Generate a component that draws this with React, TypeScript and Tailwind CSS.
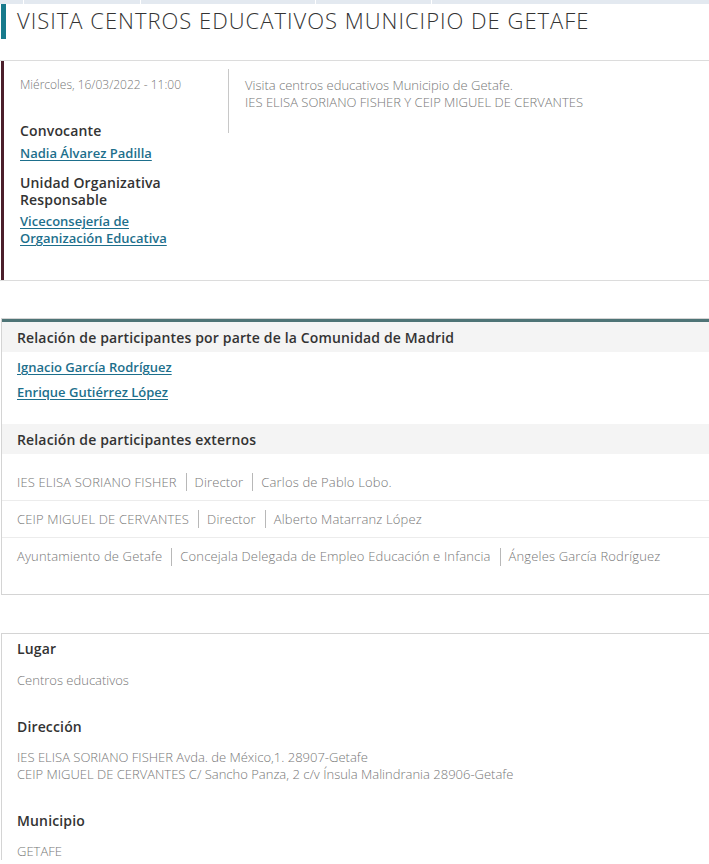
const externos = [
  ["IES ELISA SORIANO FISHER", "Director", "Carlos de Pablo Lobo."],
  ["CEIP MIGUEL DE CERVANTES", "Director", "Alberto Matarranz López"],
  ["Ayuntamiento de Getafe", "Concejala Delegada de Empleo Educación e Infancia", "Ángeles García Rodríguez"],
];

const linkCls = "text-[#1d6f8c] underline underline-offset-2 decoration-1 text-[13px] font-semibold";
const headCls = "text-[14px] font-semibold tracking-[0.15px] text-[#333]";
const bodyCls = "text-[13px] leading-[17px] font-light text-[#777]";

const App = () => {
  return (
    <div className="w-[709px] min-h-[864px] bg-white text-[#333] font-['Open_Sans',sans-serif] overflow-hidden">
      {/* top strip */}
      <div className="h-[4px] bg-[#e3e9f0] flex">
        <div className="w-[24px] border-r border-white" />
        <div className="w-[117px] border-r border-white" />
        <div className="w-[175px] border-r border-white" />
        <div className="w-[116px] border-r border-white" />
      </div>

      {/* title */}
      <div className="flex items-stretch h-[35px] pl-[1px]">
        <div className="w-[5px] bg-[#177a8c]" />
        <h1 className="pl-[11px] text-[22px] leading-[33px] font-light tracking-[1px] text-[#333]">
          VISITA CENTROS EDUCATIVOS MUNICIPIO DE GETAFE
        </h1>
      </div>

      {/* event card */}
      <div className="mt-[21px] border-t border-b border-[#dcdcdc] flex h-[221px]">
        <div className="w-[3px] ml-[1px] bg-[#4b1f2b]" />
        <div className="flex pt-[16px]">
          <div className="w-[224px] pl-[16px] pr-[8px]">
            <p className="text-[12px] leading-[16px] font-light text-[#777]">Miércoles, 16/03/2022 - 11:00</p>
            <h3 className={`${headCls} mt-[29px] leading-[17px]`}>Convocante</h3>
            <a className={`${linkCls} block mt-[6px] leading-[17px]`}>Nadia Álvarez Padilla</a>
            <h3 className={`${headCls} mt-[12px] leading-[17px]`}>
              Unidad Organizativa<br />Responsable
            </h3>
            <a className={`${linkCls} block mt-[5px] leading-[17px]`}>
              Viceconsejería de<br />Organización Educativa
            </a>
          </div>
          <div className="self-start h-[64px] -mt-[8px] border-l border-[#c8c8c8]" />
          <div className={`pl-[16px] ${bodyCls}`}>
            <p>Visita centros educativos Municipio de Getafe.</p>
            <p>IES ELISA SORIANO FISHER Y CEIP MIGUEL DE CERVANTES</p>
          </div>
        </div>
      </div>

      {/* participants */}
      <div className="mt-[37px] border-t border-[#d4d4d4] border-l border-b ml-[1px]">
        <div className="border-t-[3px] border-[#4e7476]" />
        <div className={`bg-[#f4f4f4] h-[30px] flex items-center pl-[15px] ${headCls}`}>
          Relación de participantes por parte de la Comunidad de Madrid
        </div>
        <div className="pl-[15px] pt-[7px] flex flex-col gap-[8px]">
          <a className={`${linkCls} leading-[17px]`}>Ignacio García Rodríguez</a>
          <a className={`${linkCls} leading-[17px]`}>Enrique Gutiérrez López</a>
        </div>
        <div className={`mt-[23px] bg-[#f4f4f4] h-[30px] flex items-center pl-[15px] ${headCls}`}>
          Relación de participantes externos
        </div>
        <div className="pt-[10px] pb-[19px]">
          {externos.map((row, i) => (
            <div
              key={i}
              className={`h-[37px] flex items-center pl-[15px] tracking-[0.15px] ${bodyCls} ${i < externos.length - 1 ? "border-b border-[#ececec]" : ""}`}
            >
              {row.map((cell, j) => (
                <span key={j} className="flex items-center">
                  {j > 0 && <span className="inline-block h-[18px] w-px bg-[#b8b8b8] ml-[9px] mr-[8px]" />}
                  {cell}
                </span>
              ))}
            </div>
          ))}
        </div>
      </div>

      {/* location */}
      <div className="mt-[38px] border-t border-l border-[#d4d4d4] ml-[1px] pl-[15px] pt-[6px]">
        <h3 className={`${headCls} leading-[17px]`}>Lugar</h3>
        <p className={`mt-[15px] ${bodyCls}`}>Centros educativos</p>
        <h3 className={`${headCls} mt-[29px] leading-[17px]`}>Dirección</h3>
        <p className={`mt-[14px] ${bodyCls}`}>
          IES ELISA SORIANO FISHER Avda. de México,1. 28907-Getafe
          <br />
          CEIP MIGUEL DE CERVANTES C/ Sancho Panza, 2 c/v Ínsula Malindrania 28906-Getafe
        </p>
        <h3 className={`${headCls} mt-[29px] leading-[17px]`}>Municipio</h3>
        <p className={`mt-[14px] ${bodyCls}`}>GETAFE</p>
      </div>
    </div>
  );
};

export default App;
